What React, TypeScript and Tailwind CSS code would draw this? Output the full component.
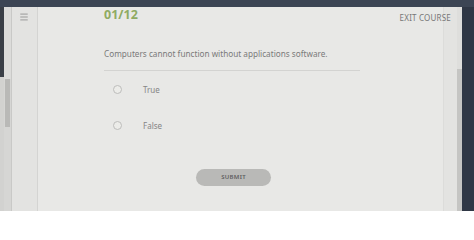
import { Menu } from 'lucide-react'

const OPTIONS = ['True', 'False']

export default function App() {
  return (
    <div
      className="flex flex-col w-[474px] h-[211px] overflow-hidden bg-[#3b4352]"
      style={{ fontFamily: '"Noto Sans", "Liberation Sans", sans-serif' }}
    >
      {/* top bezel */}
      <div className="h-[7px] shrink-0 bg-[#3c4554]" />

      <div className="flex flex-1 min-h-0">
        {/* left edge + scrollbar */}
        <div className="w-[4px] shrink-0 flex flex-col">
          <div className="h-[70px] bg-[#3a3f47]" />
          <div className="flex-1 bg-[#d2d2d0]" />
        </div>
        <div className="w-[8px] shrink-0 flex flex-col bg-[#d6d6d4] border-r border-[#c9c9c7]">
          <div className="h-[72px] bg-[#dcdcda]" />
          <div className="h-[48px] mx-[1px] bg-[#b9b9b7]" />
          <div className="flex-1" />
        </div>

        {/* sidebar */}
        <div className="w-[26px] shrink-0 bg-[#e3e3e1] border-r border-[#d4d4d2] flex flex-col items-center pt-[5px]">
          <Menu className="w-[10px] h-[10px] text-[#8c8c8c] mr-[2px]" strokeWidth={2} />
        </div>

        {/* main */}
        <div className="flex-1 bg-[#e8e8e6] flex">
          <div className="flex-1 flex flex-col pl-[66px] relative">
            <div className="flex items-start justify-between">
              <div className="text-[12.5px] font-bold text-[#8fab62] leading-none mt-[2px]">01/12</div>
              <div className="text-[8px] text-[#777777] tracking-[0.2px] mt-[5px] mr-[-8px]">EXIT COURSE</div>
            </div>

            <div className="mt-[26px] text-[8.2px] text-[#7a7a7a] leading-none">
              Computers cannot function without applications software.
            </div>
            <div className="mt-[12px] w-[256px] h-px bg-[#d3d3d1]" />

            <div className="flex flex-col gap-[27px] mt-[14px] pl-[9px]">
              {OPTIONS.map((option) => (
                <div key={option} className="flex items-center">
                  <span className="w-[9px] h-[9px] rounded-full border border-[#bdbdbb] bg-[#ecece9]" />
                  <span className="ml-[21px] text-[8px] text-[#858585] leading-none">{option}</span>
                </div>
              ))}
            </div>

            <div className="flex mt-[39px] pl-[92px]">
              <button className="w-[75px] h-[17px] rounded-full bg-[#b9b9b7] text-[6px] font-semibold text-[#606060] tracking-[0.3px]">
                SUBMIT
              </button>
            </div>
          </div>

          {/* right column */}
          <div className="w-[14px] shrink-0 border-l border-[#dcdcda] bg-[#e3e3e1]" />
          <div className="w-[5px] shrink-0 flex flex-col bg-[#dededc]">
            <div className="h-[62px]" />
            <div className="flex-1 bg-[#c5c5c3]" />
          </div>
        </div>

        {/* right bezel */}
        <div className="w-[12px] shrink-0 bg-[#2f3745]" />
      </div>
    </div>
  )
}
